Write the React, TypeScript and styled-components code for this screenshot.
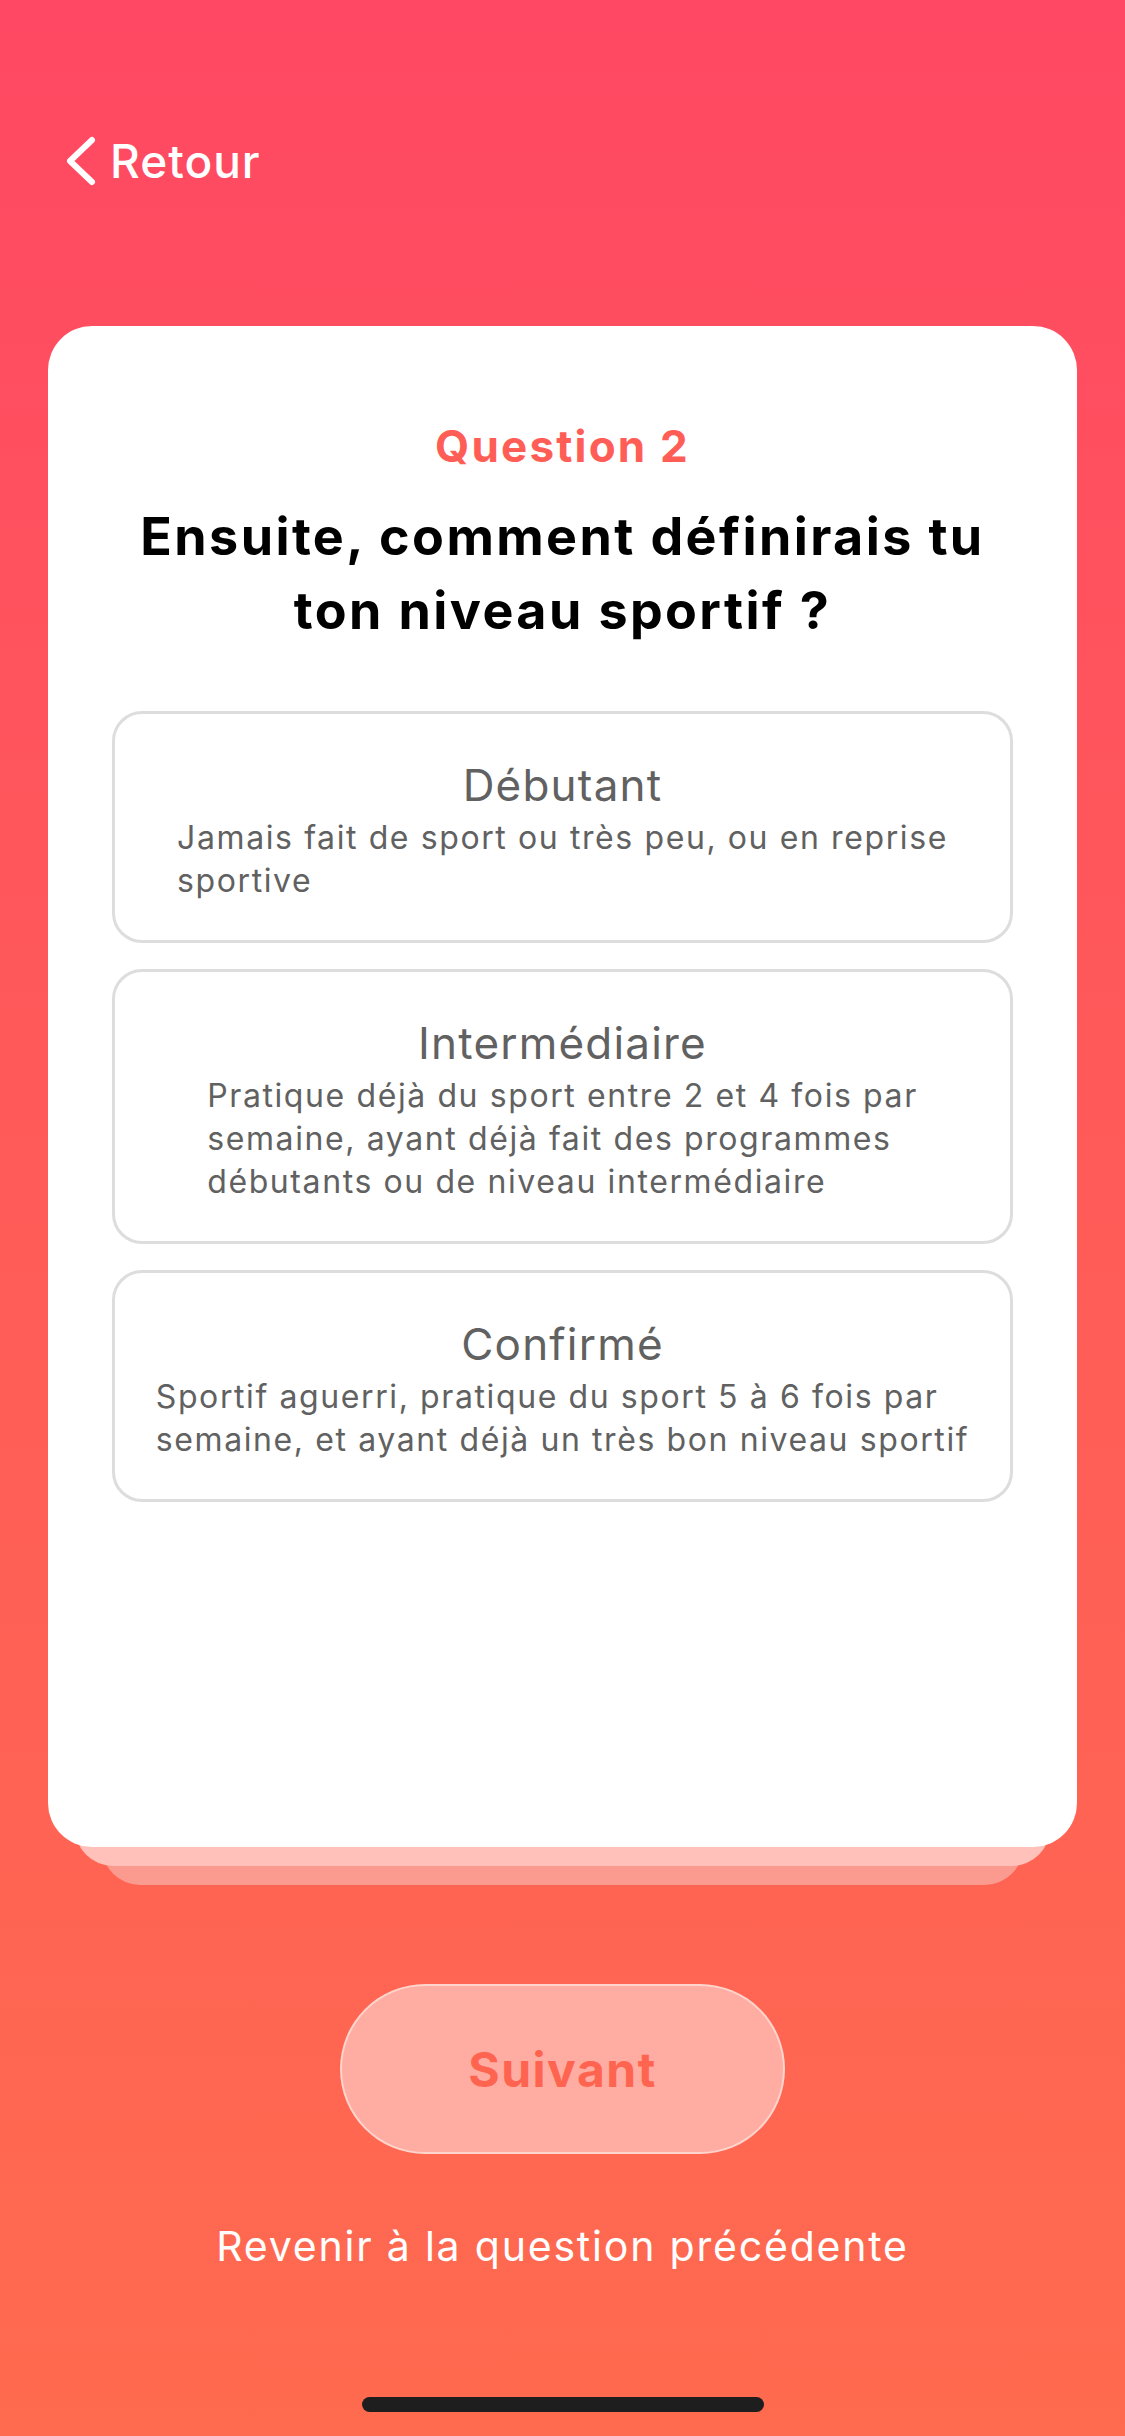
import React from "react";
import styled, { createGlobalStyle } from "styled-components";

const GlobalStyle = createGlobalStyle`
  html, body {
    margin: 0;
    padding: 0;
  }
  body {
    font-family: Inter, "Liberation Sans", sans-serif;
    -webkit-font-smoothing: antialiased;
  }
`;

const Screen = styled.div`
  width: 1125px;
  height: 2436px;
  overflow: hidden;
  display: flex;
  flex-direction: column;
  background: linear-gradient(180deg, #ff4863 0%, #ff5a59 45%, #ff6b4f 100%);
`;

const BackRow = styled.div`
  display: flex;
  align-items: center;
  gap: 14px;
  margin: 133px 0 0 66px;
  height: 56px;
  color: #ffffff;
  font-family: Inter, sans-serif;
  font-size: 46px;
  font-weight: 500;
  letter-spacing: 1px;
  line-height: 56px;
  cursor: pointer;
`;

const CardStack = styled.div`
  position: relative;
  margin: 137px 48px 0;
  padding-bottom: 38px;
`;

const BackLayer = styled.div<{ $inset: number; $drop: number; $color: string }>`
  position: absolute;
  left: ${(p) => p.$inset}px;
  right: ${(p) => p.$inset}px;
  bottom: ${(p) => 38 - p.$drop}px;
  height: 200px;
  border-radius: 0 0 38px 38px;
  background: ${(p) => p.$color};
`;

const Card = styled.div`
  position: relative;
  height: 1521px;
  box-sizing: border-box;
  padding: 92px 64px 0;
  background: #ffffff;
  border-radius: 44px;
  display: flex;
  flex-direction: column;
  align-items: stretch;
`;

const QuestionLabel = styled.div`
  text-align: center;
  color: #ff5e57;
  font-family: Inter, sans-serif;
  font-size: 44px;
  font-weight: 700;
  line-height: 56px;
  letter-spacing: 2.2px;
`;

const QuestionTitle = styled.h1`
  margin: 26px 0 0;
  text-align: center;
  color: #000000;
  font-family: Inter, sans-serif;
  font-size: 52px;
  font-weight: 700;
  line-height: 74px;
  letter-spacing: 2.4px;
`;

const Options = styled.div`
  margin-top: 63px;
  display: flex;
  flex-direction: column;
  gap: 26px;
`;

const OptionBox = styled.button`
  display: flex;
  flex-direction: column;
  align-items: center;
  width: 100%;
  box-sizing: border-box;
  padding: 45px 20px 38px;
  background: #ffffff;
  border: 3px solid #dddddd;
  border-radius: 30px;
  cursor: pointer;
  color: #616161;
  font-family: Inter, sans-serif;
`;

const OptionTitle = styled.div`
  font-size: 44px;
  font-weight: 400;
  line-height: 52px;
  letter-spacing: 1.2px;
`;

const OptionText = styled.div`
  margin-top: 5px;
  text-align: left;
  white-space: pre-line;
  font-size: 32px;
  font-weight: 400;
  line-height: 43px;
  letter-spacing: 1.6px;
`;

const NextButton = styled.button`
  align-self: center;
  margin-top: 99px;
  width: 445px;
  height: 170px;
  box-sizing: border-box;
  border-radius: 85px;
  border: 2px solid rgba(255, 225, 218, 0.75);
  background: #ffada2;
  color: #ff6450;
  font-family: Inter, sans-serif;
  font-size: 48px;
  font-weight: 700;
  letter-spacing: 1.5px;
  cursor: pointer;
`;

const PrevLink = styled.div`
  margin-top: 64px;
  text-align: center;
  color: #ffffff;
  font-family: Inter, sans-serif;
  font-size: 41px;
  font-weight: 400;
  line-height: 56px;
  letter-spacing: 1.8px;
  cursor: pointer;
`;

const HomeIndicator = styled.div`
  align-self: center;
  margin-top: 123px;
  width: 402px;
  height: 15px;
  border-radius: 8px;
  background: #1e1e1e;
`;

const ChevronLeft = () => (
  <svg width="30" height="50" viewBox="0 0 30 50" fill="none">
    <path
      d="M26 4 L4 25 L26 46"
      stroke="#ffffff"
      strokeWidth="6"
      strokeLinecap="round"
      strokeLinejoin="round"
    />
  </svg>
);

const levels = [
  {
    title: "Débutant",
    text: "Jamais fait de sport ou très peu, ou en reprise\nsportive",
  },
  {
    title: "Intermédiaire",
    text:
      "Pratique déjà du sport entre 2 et 4 fois par\nsemaine, ayant déjà fait des programmes\ndébutants ou de niveau intermédiaire",
  },
  {
    title: "Confirmé",
    text:
      "Sportif aguerri, pratique du sport 5 à 6 fois par\nsemaine, et ayant déjà un très bon niveau sportif",
  },
];

export default function App() {
  return (
    <>
      <GlobalStyle />
      <Screen>
        <BackRow>
          <ChevronLeft />
          Retour
        </BackRow>

        <CardStack>
          <BackLayer $inset={54} $drop={38} $color="#fb9a8e" />
          <BackLayer $inset={27} $drop={19} $color="#ffc1b9" />
          <Card>
            <QuestionLabel>Question 2</QuestionLabel>
            <QuestionTitle>
              Ensuite, comment définirais tu
              <br />
              ton niveau sportif ?
            </QuestionTitle>
            <Options>
              {levels.map((l) => (
                <OptionBox key={l.title}>
                  <OptionTitle>{l.title}</OptionTitle>
                  <OptionText>{l.text}</OptionText>
                </OptionBox>
              ))}
            </Options>
          </Card>
        </CardStack>

        <NextButton>Suivant</NextButton>
        <PrevLink>Revenir à la question précédente</PrevLink>
        <HomeIndicator />
      </Screen>
    </>
  );
}
